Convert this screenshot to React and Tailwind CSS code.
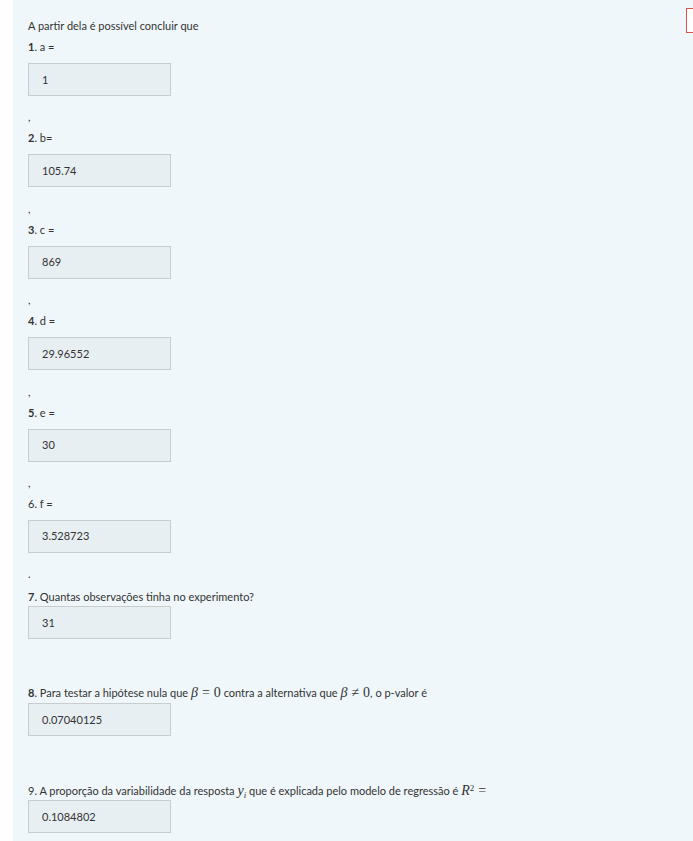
// Lista de respostas de um questionário de regressão
const font = { fontFamily: 'Lato, "Noto Sans", sans-serif' };

const items = [
  { n: '1', bold: true, label: 'a =', value: '1', sep: ',' },
  { n: '2', bold: true, label: 'b=', value: '105.74', sep: ',' },
  { n: '3', bold: true, label: 'c =', value: '869', sep: ',' },
  { n: '4', bold: true, label: 'd =', value: '29.96552', sep: ',' },
  { n: '5', bold: true, label: 'e =', value: '30', sep: ',' },
  { n: '6', bold: false, label: 'f =', value: '3.528723', sep: '.' },
];

function Math({ children }) {
  return (
    <span className="text-[14px] leading-none" style={{ fontFamily: '"Liberation Serif", "DejaVu Serif", serif' }}>
      {children}
    </span>
  );
}

function Rel({ children }) {
  return <span className="mx-[4px] not-italic">{children}</span>;
}

function Answer({ value }) {
  return (
    <div className="w-[143px] h-[33px] border border-[#c9cdce] bg-[#e8eff2] flex items-center pl-[13px] text-[11px] text-[#333]">
      {value}
    </div>
  );
}

export default function App() {
  return (
    <div className="w-[693px] h-[841px] bg-white overflow-hidden" style={font}>
      <div className="ml-[13px] h-full bg-[#eff7fa] relative pl-[15px] pt-[18px] text-[11px] leading-[16px] text-[#333]">
        <div className="absolute right-0 top-[8px] w-[7px] h-[25px] border border-r-0 border-[#d9534f] bg-white" />

        <p>A partir dela é possível concluir que</p>

        {items.map((it) => (
          <div key={it.n}>
            <p className="mt-[5px] mb-[8px]">
              <span className={it.bold ? 'font-bold' : ''}>{it.n}</span>. {it.label}
            </p>
            <Answer value={it.value} />
            <p className="mt-[13.4px]">{it.sep}</p>
          </div>
        ))}

        <p className="mt-[7px] mb-[1px]">
          <span className="font-bold">7</span>. Quantas observações tinha no experimento?
        </p>
        <Answer value="31" />

        <p className="mt-[46px] mb-[2px]">
          <span className="font-bold">8</span>. Para testar a hipótese nula que{' '}
          <Math><i>β</i><Rel>=</Rel>0</Math> contra a alternativa que <Math><i>β</i><Rel>≠</Rel>0</Math>, o p-valor é
        </p>
        <Answer value="0.07040125" />

        <p className="mt-[47px] mb-[1px]">
          9. A proporção da variabilidade da resposta{' '}
          <Math><i>y</i><sub className="text-[9px]"><i>i</i></sub></Math> que é explicada pelo modelo de regressão é{' '}
          <Math><i>R</i><sup className="text-[9px]">2</sup><Rel>=</Rel></Math>
        </p>
        <Answer value="0.1084802" />
      </div>
    </div>
  );
}
